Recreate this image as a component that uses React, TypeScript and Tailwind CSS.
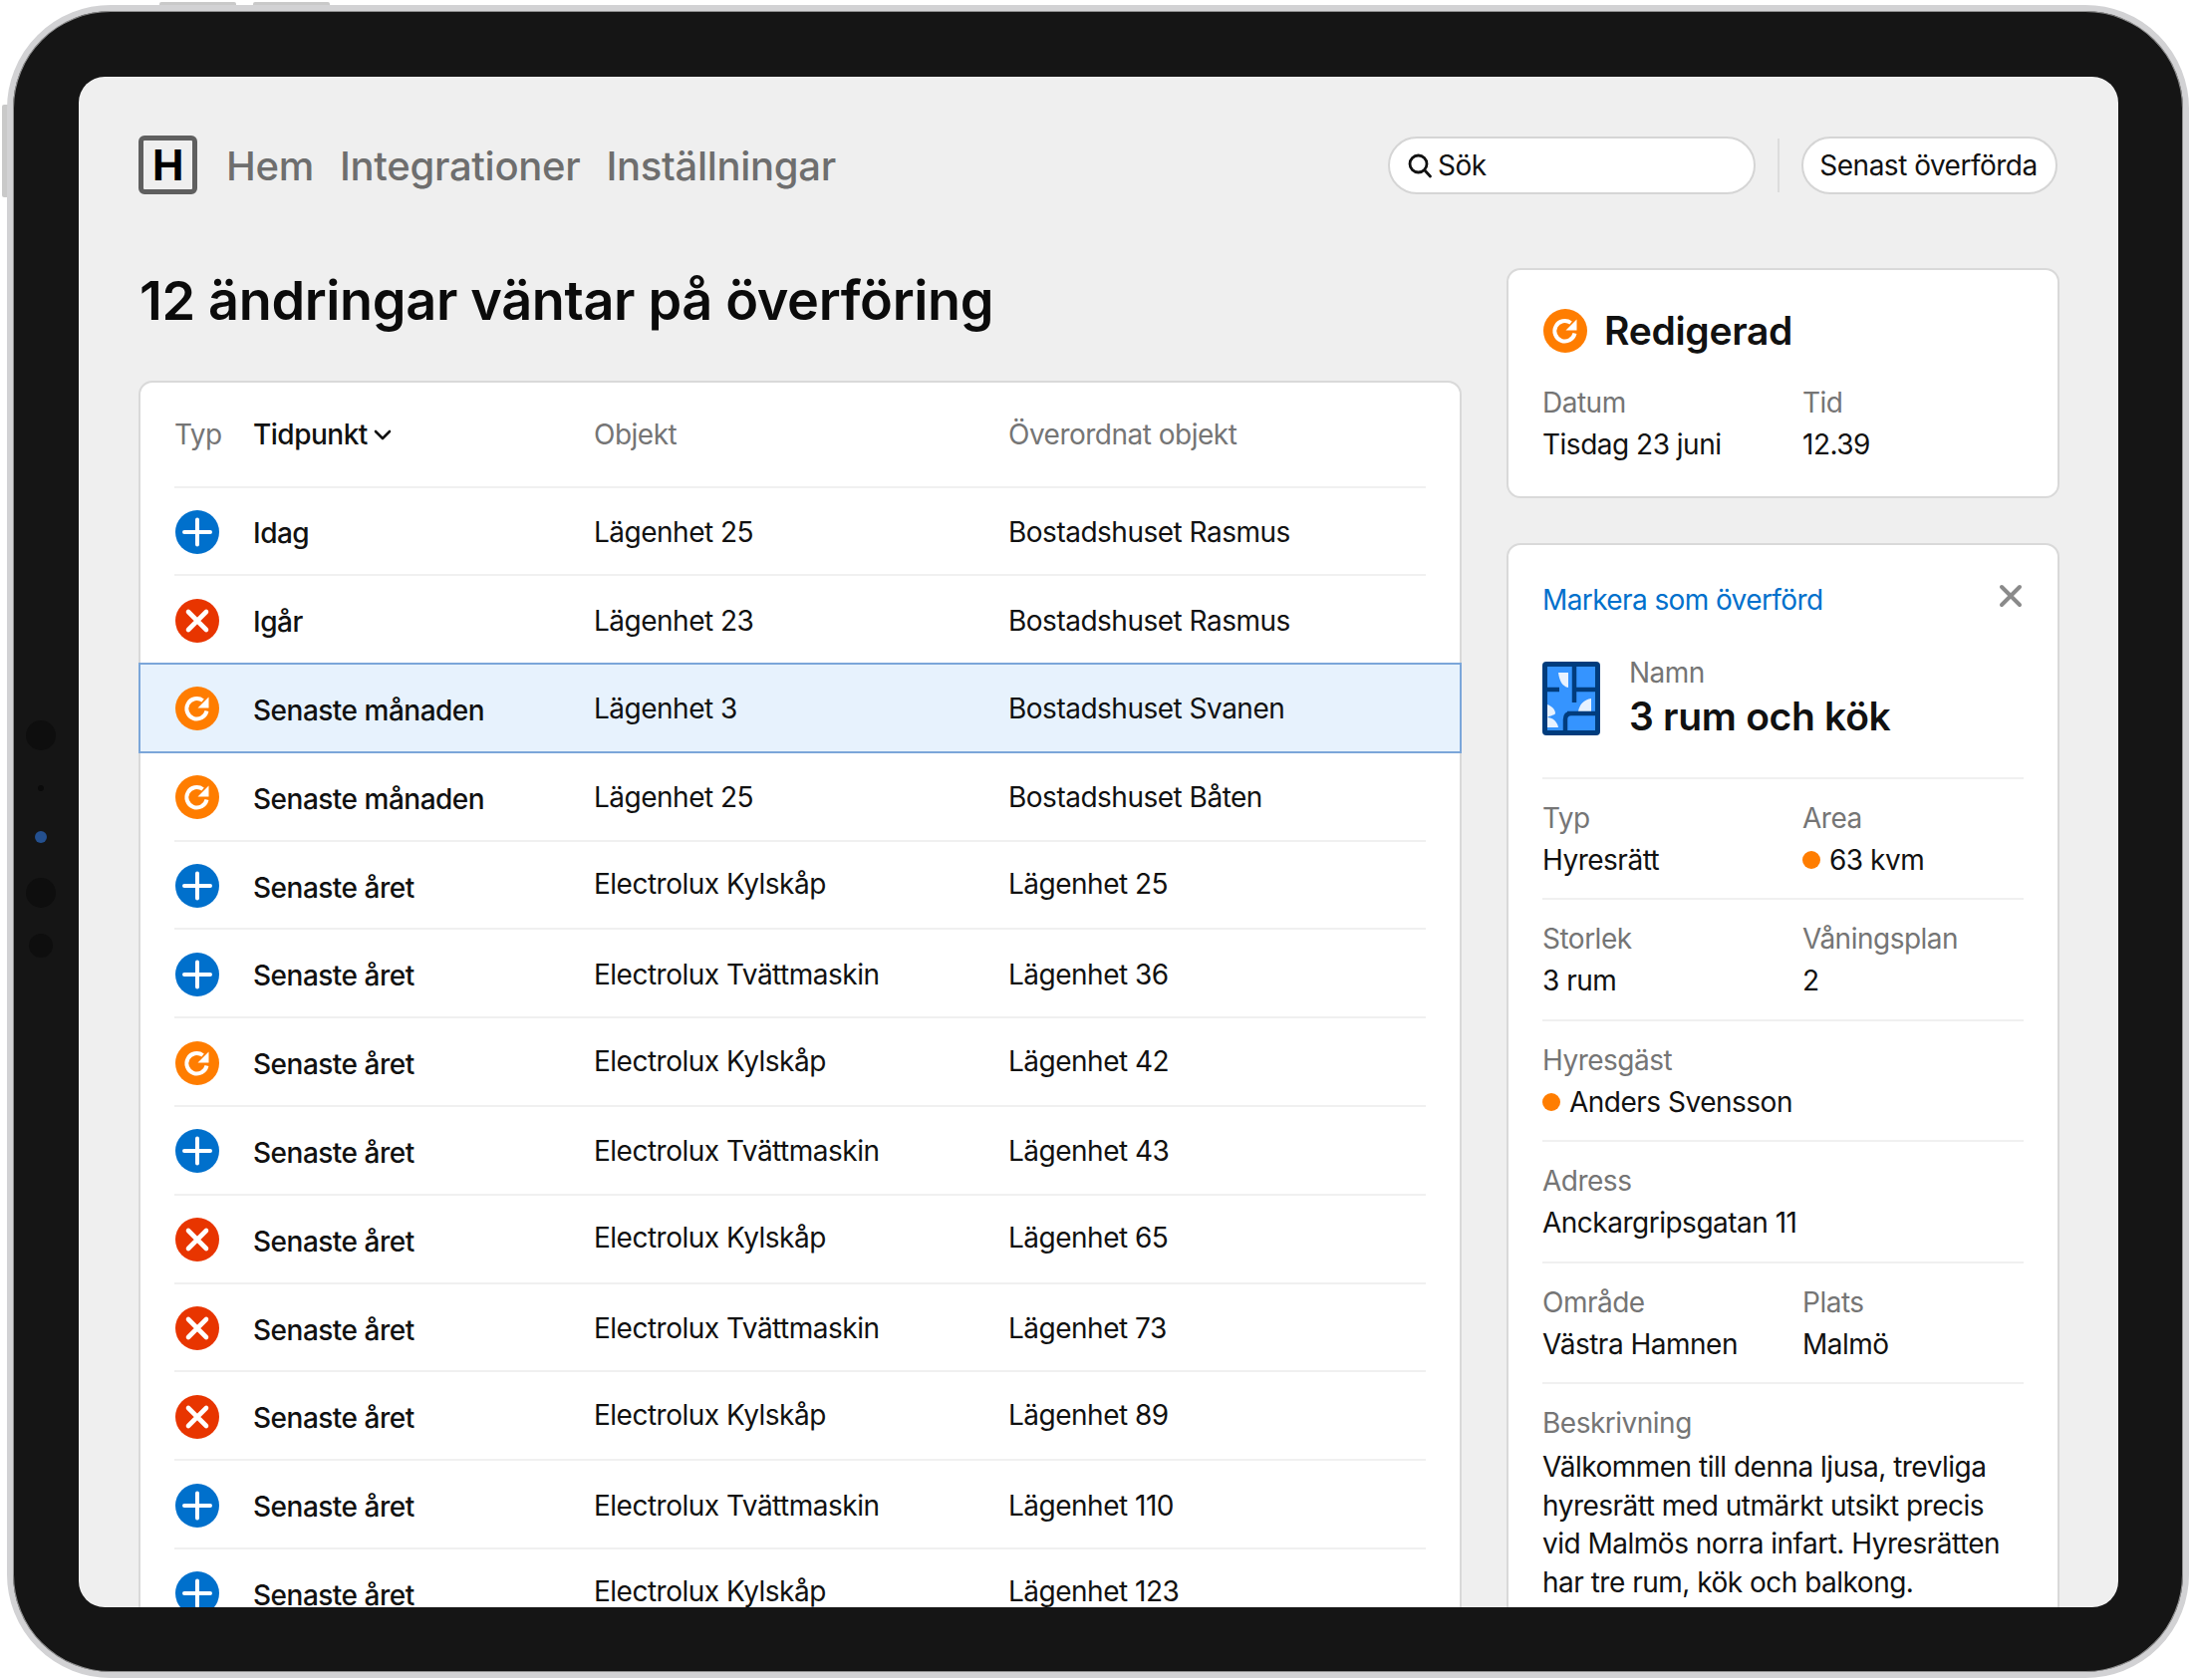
import React from "react";

type Kind = "add" | "del" | "edit";

function StatusIcon({ kind, size = 44 }: { kind: Kind; size?: number }) {
  const fill = kind === "add" ? "#0070cc" : kind === "del" ? "#e83500" : "#ff7d00";
  return (
    <svg width={size} height={size} viewBox="0 0 44 44" className="block shrink-0">
      <circle cx="22" cy="22" r="22" fill={fill} />
      {kind === "add" && (
        <path d="M22 9.5V34.5M9 22H35" stroke="#fff" strokeWidth="4" strokeLinecap="round" fill="none" />
      )}
      {kind === "del" && (
        <path d="M13 13L31 31M31 13L13 31" stroke="#fff" strokeWidth="4.6" strokeLinecap="round" fill="none" />
      )}
      {kind === "edit" && (
        <>
          <path d="M31.5 24.5A10.2 10.2 0 1 1 27.6 14" stroke="#fff" strokeWidth="4" strokeLinecap="butt" fill="none" />
          <path d="M33.5 10.5V21.5H22.5Z" fill="#fff" />
        </>
      )}
    </svg>
  );
}

const rows: { k: Kind; t: string; o: string; p: string; sel?: boolean; up?: boolean }[] = [
  { k: "add", t: "Idag", o: "Lägenhet 25", p: "Bostadshuset Rasmus" },
  { k: "del", t: "Igår", o: "Lägenhet 23", p: "Bostadshuset Rasmus" },
  { k: "edit", t: "Senaste månaden", o: "Lägenhet 3", p: "Bostadshuset Svanen", sel: true },
  { k: "edit", t: "Senaste månaden", o: "Lägenhet 25", p: "Bostadshuset Båten" },
  { k: "add", t: "Senaste året", o: "Electrolux Kylskåp", p: "Lägenhet 25", up: true },
  { k: "add", t: "Senaste året", o: "Electrolux Tvättmaskin", p: "Lägenhet 36" },
  { k: "edit", t: "Senaste året", o: "Electrolux Kylskåp", p: "Lägenhet 42", up: true },
  { k: "add", t: "Senaste året", o: "Electrolux Tvättmaskin", p: "Lägenhet 43" },
  { k: "del", t: "Senaste året", o: "Electrolux Kylskåp", p: "Lägenhet 65", up: true },
  { k: "del", t: "Senaste året", o: "Electrolux Tvättmaskin", p: "Lägenhet 73" },
  { k: "del", t: "Senaste året", o: "Electrolux Kylskåp", p: "Lägenhet 89", up: true },
  { k: "add", t: "Senaste året", o: "Electrolux Tvättmaskin", p: "Lägenhet 110" },
  { k: "add", t: "Senaste året", o: "Electrolux Kylskåp", p: "Lägenhet 123", up: true },
];

function Row({ r }: { r: (typeof rows)[number] }) {
  const inner = (
    <>
      <div className="w-[79px] shrink-0 pl-[1px]">
        <StatusIcon kind={r.k} />
      </div>
      <div className="w-[342px] shrink-0 font-[550] pt-[3px]">{r.t}</div>
      <div className={r.up ? "w-[416px] shrink-0 -translate-y-[2px]" : "w-[416px] shrink-0"}>{r.o}</div>
      <div className={r.up ? "-translate-y-[2px]" : ""}>{r.p}</div>
    </>
  );
  if (r.sel) {
    return (
      <div className="relative z-10 -mt-[2px] -mx-[2px] h-[90.8px] pt-[2px] flex items-center px-[34px] bg-[#e7f2fd] border-2 border-[#7ba6d9]">
        {inner}
      </div>
    );
  }
  return (
    <div className="px-[34px]">
      <div className="h-[88.8px] pt-[2px] flex items-center border-b-2 border-[#f0f0f0]">{inner}</div>
    </div>
  );
}

function Field({ label, value, dot, className = "" }: { label: string; value: string; dot?: boolean; className?: string }) {
  return (
    <div className={className}>
      <div className="text-[#757575] h-[42px] leading-[42px]">{label}</div>
      <div className="h-[42px] leading-[42px] flex items-center gap-[9px] whitespace-nowrap">
        {dot && <span className="w-[18px] h-[18px] rounded-full bg-[#ff7d00] inline-block" />}
        {value}
      </div>
    </div>
  );
}

function Section({ a, b }: { a: React.ReactNode; b?: React.ReactNode }) {
  return (
    <div className="h-[121.4px] pt-[18px] border-b-2 border-[#f0f0f0] flex">
      <div className="w-[261px] shrink-0">{a}</div>
      {b && <div>{b}</div>}
    </div>
  );
}

function Floorplan() {
  return (
    <svg width="58" height="74" viewBox="0 0 58 74" className="block shrink-0">
      <rect width="58" height="74" rx="4" fill="#003c7d" />
      <rect x="5" y="5" width="48" height="64" fill="#3594ff" />
      <path d="M16 11H26V26C20 25 17 19 16 11Z" fill="#e8f2ff" />
      <path d="M49 37V50H36C37 43 42 38 49 37Z" fill="#e8f2ff" />
      <path d="M5 43C10 45 13 48 13 52C12 54 8 54 5 56Z" fill="#e8f2ff" />
      <path d="M5 56C10 56 15 60 16 66H5Z" fill="#e8f2ff" />
      <path d="M32 3V41M32 28H56M2 28H17M23 58C23 54 25 52 29 52H56M29 52H25" stroke="#003c7d" strokeWidth="4.5" fill="none" />
      <path d="M23 58V72" stroke="#003c7d" strokeWidth="4.5" fill="none" />
    </svg>
  );
}

function Dot({ className }: { className: string }) {
  return <div className={"absolute rounded-full " + className} />;
}

export default function App() {
  return (
    <div
      className="relative w-[2200px] h-[1686px] bg-white overflow-hidden text-[28px] text-[#111] tracking-[-0.5px]"
      style={{ fontFamily: "Inter, 'Liberation Sans', sans-serif" }}
    >
      {/* hardware buttons */}
      <div className="absolute left-[160px] top-[2px] w-[77px] h-[8px] rounded-t-[2px] bg-[#c9c9c9]" />
      <div className="absolute left-[254px] top-[2px] w-[77px] h-[8px] rounded-t-[2px] bg-[#c9c9c9]" />
      <div className="absolute left-[2px] top-[105px] w-[8px] h-[93px] rounded-l-[2px] bg-[#c9c9c9]" />

      {/* device */}
      <div className="absolute left-[7px] top-[5px] w-[2190px] h-[1679px] rounded-[104px] bg-[#151515] border-[6px] border-[#d2d2d4] shadow-[inset_0_0_0_1px_#8f8f8f] p-[66px]">
        <Dot className="left-[13px] top-[712px] w-[30px] h-[30px] bg-[#0e0e0e]" />
        <Dot className="left-[25px] top-[777px] w-[6px] h-[6px] bg-[#0b0b0b]" />
        <Dot className="left-[22px] top-[823px] w-[12px] h-[12px] bg-[#24508f]" />
        <Dot className="left-[13px] top-[870px] w-[30px] h-[30px] bg-[#0e0e0e]" />
        <Dot className="left-[16px] top-[926px] w-[24px] h-[24px] bg-[#0e0e0e]" />

        {/* screen */}
        <div className="w-[2047px] h-[1536px] bg-[#efefef] rounded-[26px] overflow-hidden pl-[60px] pr-[60px] pt-[59px]">
          {/* top bar */}
          <header className="flex items-center h-[59px]">
            <div className="w-[59px] h-[59px] rounded-[6px] border-[5px] border-[#5f5f5f] flex items-center justify-center font-bold text-[42px] text-black">
              H
            </div>
            <nav className="flex gap-[26px] ml-[29px] pt-[2px] text-[40px] font-medium text-[#6e6e6e] tracking-[-0.3px]">
              <span>Hem</span>
              <span>Integrationer</span>
              <span>Inställningar</span>
            </nav>
            <div className="ml-auto mr-[1px] flex items-center h-[58px]">
              <div className="w-[369px] h-[58px] rounded-full bg-white border-2 border-[#d5d5d5] flex items-center pl-[17px] gap-[5px]">
                <svg width="26" height="26" viewBox="0 0 26 26" fill="none" stroke="#111" strokeWidth="2.8" strokeLinecap="round">
                  <circle cx="11.5" cy="11.5" r="8.5" />
                  <path d="M18 18L23.5 24" />
                </svg>
                <span>Sök</span>
              </div>
              <div className="w-[2px] h-[54px] bg-[#dcdcdc] mx-[22px]" />
              <div className="w-[257px] h-[58px] rounded-full bg-white border-2 border-[#d5d5d5] flex items-center justify-center pr-[2px]">
                Senast överförda
              </div>
            </div>
          </header>

          <main className="flex gap-[45px] mt-[74px] items-start">
            {/* left column */}
            <section className="w-[1328px] shrink-0">
              <h1 className="h-[66px] leading-[66px] mb-[47px] ml-[1px] text-[54px] font-semibold text-[#0b0b0b] tracking-[-0.35px]">
                12 ändringar väntar på överföring
              </h1>
              <div className="bg-white border-2 border-[#d9d9d9] rounded-[14px]">
                <div className="px-[34px]">
                  <div className="h-[105.5px] flex items-center border-b-2 border-[#f0f0f0] text-[#757575]">
                    <div className="w-[79px] shrink-0">Typ</div>
                    <div className="w-[342px] shrink-0 text-[#111] font-[550] flex items-center gap-[6px]">
                      Tidpunkt
                      <svg width="18" height="12" viewBox="0 0 18 12" fill="none" stroke="#111" strokeWidth="2.6" strokeLinecap="round" strokeLinejoin="round">
                        <path d="M2 3L9 10L16 3" />
                      </svg>
                    </div>
                    <div className="w-[416px] shrink-0">Objekt</div>
                    <div>Överordnat objekt</div>
                  </div>
                </div>
                <div>
                  {rows.map((r, i) => (
                    <Row key={i} r={r} />
                  ))}
                </div>
              </div>
            </section>

            {/* right column */}
            <aside className="w-[555px] shrink-0">
              <div className="h-[231px] bg-white border-2 border-[#d9d9d9] rounded-[14px] px-[34px] pt-[39px]">
                <div className="flex items-center gap-[17px] h-[44px] ml-[1px]">
                  <StatusIcon kind="edit" />
                  <span className="text-[39px] font-semibold tracking-[-0.3px]">Redigerad</span>
                </div>
                <div className="flex mt-[29px]">
                  <Field label="Datum" value="Tisdag 23 juni" className="w-[261px]" />
                  <Field label="Tid" value="12.39" />
                </div>
              </div>

              <div className="mt-[45px] bg-white border-2 border-[#d9d9d9] rounded-[14px] px-[34px] pt-[30px]">
                <div className="flex items-start justify-between h-[50px]">
                  <span className="text-[#0070cc] leading-[50px] tracking-[-0.6px]">Markera som överförd</span>
                  <svg width="24" height="24" viewBox="0 0 24 24" className="mt-[9px] mr-[1px]" fill="none" stroke="#8a8a8a" strokeWidth="4" strokeLinecap="round">
                    <path d="M3 3L21 21M21 3L3 21" />
                  </svg>
                </div>
                <div className="flex items-start gap-[29px] mt-[37px] h-[118px] border-b-2 border-[#f0f0f0]">
                  <Floorplan />
                  <div className="-mt-[6px]">
                    <div className="text-[#757575] leading-[34px]">Namn</div>
                    <div className="text-[39px] font-semibold leading-[56px] -mt-[1px] tracking-[-0.3px]">3 rum och kök</div>
                  </div>
                </div>
                <Section
                  a={<Field label="Typ" value="Hyresrätt" />}
                  b={<Field label="Area" value="63 kvm" dot />}
                />
                <Section
                  a={<Field label="Storlek" value="3 rum" />}
                  b={<Field label="Våningsplan" value="2" />}
                />
                <Section a={<Field label="Hyresgäst" value="Anders Svensson" dot />} />
                <Section a={<Field label="Adress" value="Anckargripsgatan 11" />} />
                <Section
                  a={<Field label="Område" value="Västra Hamnen" />}
                  b={<Field label="Plats" value="Malmö" />}
                />
                <div className="pt-[18px]">
                  <div className="text-[#757575] h-[42px] leading-[42px]">Beskrivning</div>
                  <p className="mt-[4px] leading-[38.7px] pb-[60px]">
                    Välkommen till denna ljusa, trevliga
                    <br />
                    hyresrätt med utmärkt utsikt precis
                    <br />
                    vid Malmös norra infart. Hyresrätten
                    <br />
                    har tre rum, kök och balkong.
                  </p>
                </div>
              </div>
            </aside>
          </main>
        </div>
      </div>
    </div>
  );
}
